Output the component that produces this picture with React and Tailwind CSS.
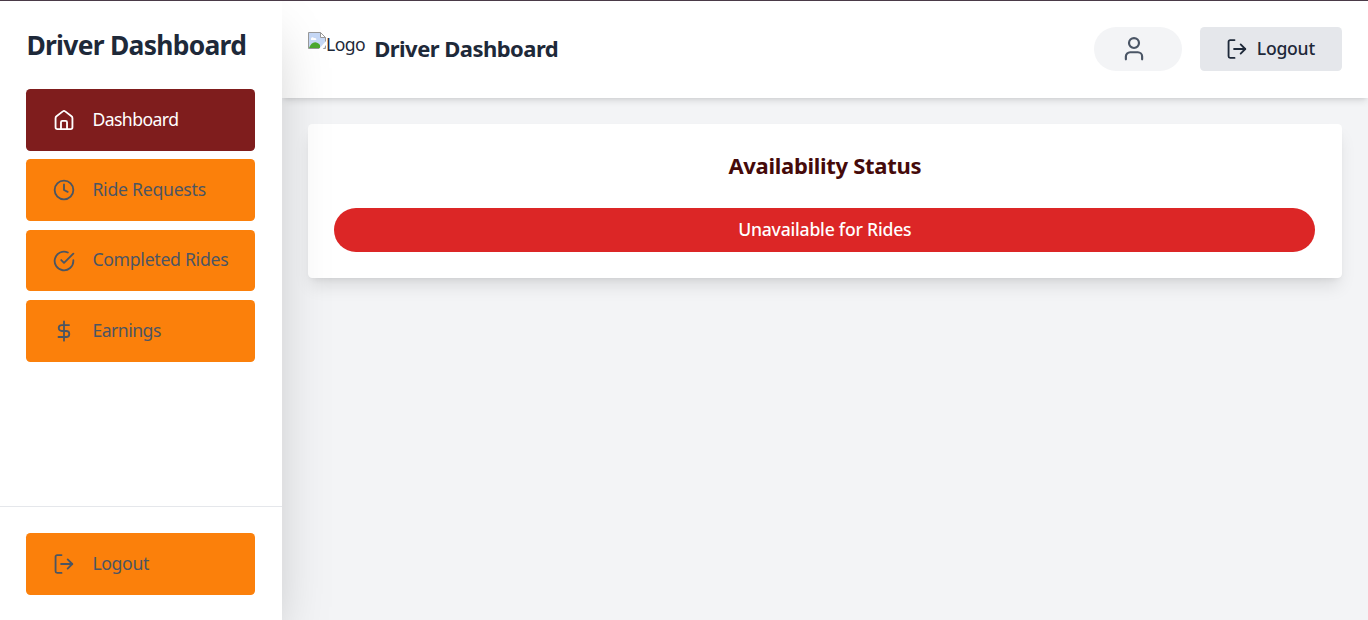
import React from "react";

const paths = {
  home: ["M2.800 10a2.500 2.500 0 0 1 1-2L10.700 2.600a2 2 0 0 1 2.600 0L20.200 8a2.500 2.500 0 0 1 1 2V20a2 2 0 0 1-2 2H4.800a2 2 0 0 1-2-2z", "M8.700 22v-7.500a1.500 1.500 0 0 1 1.500-1.500h3.600a1.500 1.500 0 0 1 1.500 1.500V22"],
  clock: ["M22.200 12a10.200 10.200 0 1 1-20.400 0a10.200 10.200 0 0 1 20.400 0z", "M12 6v6l4 2"],
  check: ["M22.200 11.080V12a10.200 10.200 0 1 1-6-9.300", "M22.200 4 12 14.010l-3-3"],
  dollar: ["M12 1.5v21", "M17.5 5.5H9.5a3.25 3.25 0 0 0 0 6.5h5a3.25 3.25 0 0 1 0 6.5H6"],
  logout: ["M9.300 21.700H4.500a1.700 1.700 0 0 1-1.700-1.700V4a1.700 1.700 0 0 1 1.700-1.700h4.800", "M8.800 12H21", "M16 7l5 5-5 5"],
  user: ["M16.600 6.500a4.600 4.600 0 1 1-9.200 0a4.600 4.600 0 0 1 9.200 0z", "M4.500 21.5v-2.500a4 4 0 0 1 4-4h7a4 4 0 0 1 4 4v2.500"],
};

function Icon({ name, className }) {
  return (
    <svg viewBox="0 0 24 24" fill="none" stroke="currentColor" strokeWidth="2" strokeLinecap="round" strokeLinejoin="round" className={className}>
      {paths[name].map((d) => <path key={d} d={d} />)}
    </svg>
  );
}

function NavItem({ icon, children, active, tracking }) {
  return (
    <button className={`flex h-[61.6px] w-full shrink-0 items-center rounded-[4.4px] px-[26.4px] text-[17.6px] ${active ? "bg-[#7f1d1d] text-white" : "bg-[#fb800b] text-[#4b5563]"}`}>
      <Icon name={icon} className="size-[22px] shrink-0" />
      <span className={`ml-[17.6px] pb-[2.4px] leading-6 whitespace-nowrap ${tracking}`}>{children}</span>
    </button>
  );
}

function BrokenImage() {
  return (
    <svg width="18" height="18" viewBox="0 0 18 18" className="shrink-0">
      <path d="M.5.5h12l5 5v11H.5z" fill="#c6d8f6" stroke="#9a9a9a" />
      <path d="M3 7c0-2 2-2.500 3-1 2-.5 3 1 2 2H3z" fill="white" />
      <path d="M1 16c2-6 7-8 11-3v3z" fill="#4ca82f" />
      <path d="M12.500.5v5h5z" fill="white" stroke="#9a9a9a" />
      <path d="M10 18 18 9v4l-4 5z" fill="white" />
    </svg>
  );
}

export default function App() {
  return (
    <div className="flex h-[620px] flex-col overflow-hidden border-t border-[#4a3a48] bg-gray-100 font-['Noto_Sans','Open_Sans',sans-serif]">
      <div className="flex min-h-0 flex-1">
        <aside className="relative z-10 flex w-[281.6px] shrink-0 flex-col bg-white shadow-[0_27px_55px_-13px_rgba(0,0,0,0.25)]">
          <h1 className="px-[26.4px] pt-[27.4px] text-[26.4px] leading-[34.2px] font-bold tracking-[-0.7px] whitespace-nowrap text-gray-800">Driver Dashboard</h1>
          <nav className="flex flex-1 flex-col gap-[8.8px] px-[26.4px] pt-[26.4px]">
            <NavItem icon="home" active tracking="tracking-[-0.55px]">Dashboard</NavItem>
            <NavItem icon="clock" tracking="tracking-[-0.23px]">Ride Requests</NavItem>
            <NavItem icon="check" tracking="tracking-[-0.26px]">Completed Rides</NavItem>
            <NavItem icon="dollar" tracking="tracking-[-0.5px]">Earnings</NavItem>
          </nav>
          <div className="border-t border-gray-200 p-[26.4px] pb-[25px]">
            <NavItem icon="logout" tracking="tracking-[-0.33px]">Logout</NavItem>
          </div>
        </aside>
        <div className="flex min-w-0 flex-1 flex-col">
          <header className="flex h-[97px] shrink-0 items-start justify-between bg-white px-[26.4px] pt-[26px] shadow-[0_4px_7px_-1px_rgba(0,0,0,0.1),0_2px_4px_-2px_rgba(0,0,0,0.1)]">
            <div className="flex h-11 items-center">
              <div className="flex h-[34px] w-[58px] items-start">
                <BrokenImage />
                <span className="text-[17.6px] leading-6 tracking-[-0.55px] text-gray-800">Logo</span>
              </div>
              <h2 className="ml-[8.2px] pb-[2px] text-[22px] leading-[31px] font-bold tracking-[-0.53px] text-gray-800">Driver Dashboard</h2>
            </div>
            <div className="flex items-center gap-[17.6px]">
              <button className="flex h-11 w-22 items-center justify-center rounded-full bg-gray-100 pr-[8.500px] text-gray-600">
                <Icon name="user" className="size-[26px]" />
              </button>
              <button className="flex h-11 w-[142px] items-center rounded-[4.4px] bg-gray-200 pl-[26.4px] text-[17.6px] font-medium text-gray-800">
                <Icon name="logout" className="mr-[8.8px] size-[22px]" />
                <span className="pb-px tracking-[-0.25px]">Logout</span>
              </button>
            </div>
          </header>
          <main className="p-[26.4px]">
            <section className="h-[154px] rounded-[4.4px] bg-white p-[26.4px] text-center shadow-[0_11px_17px_-3px_rgba(0,0,0,0.1),0_4px_7px_-4px_rgba(0,0,0,0.1)]">
              <h3 className="pb-[2px] text-[22px] leading-[29px] font-bold tracking-[-0.3px] text-[#450a0a]">Availability Status</h3>
              <button className="mt-[26.4px] h-11 w-full rounded-full bg-[#dc2626] pb-[2px] text-[17.6px] font-medium tracking-[-0.22px] text-white">Unavailable for Rides</button>
            </section>
          </main>
        </div>
      </div>
    </div>
  );
}
